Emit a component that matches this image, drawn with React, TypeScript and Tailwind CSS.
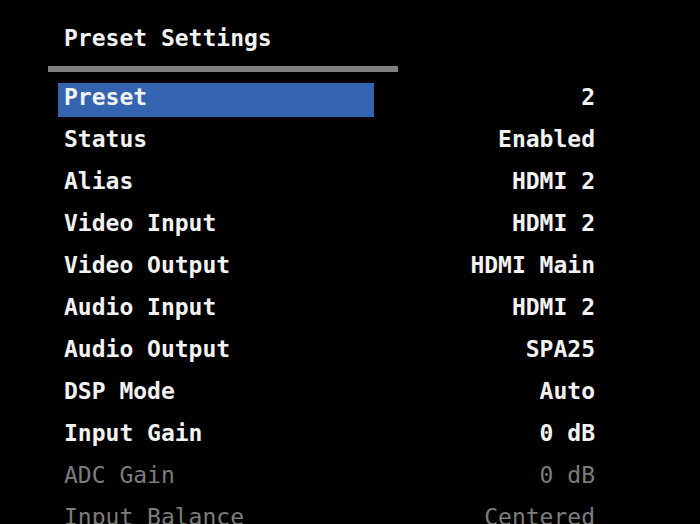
import React from "react";

const rows: { label: string; value: string; selected?: boolean; disabled?: boolean }[] = [
  { label: "Preset", value: "2", selected: true },
  { label: "Status", value: "Enabled" },
  { label: "Alias", value: "HDMI 2" },
  { label: "Video Input", value: "HDMI 2" },
  { label: "Video Output", value: "HDMI Main" },
  { label: "Audio Input", value: "HDMI 2" },
  { label: "Audio Output", value: "SPA25" },
  { label: "DSP Mode", value: "Auto" },
  { label: "Input Gain", value: "0 dB" },
  { label: "ADC Gain", value: "0 dB", disabled: true },
  { label: "Input Balance", value: "Centered", disabled: true },
];

export default function App() {
  return (
    <div
      className="w-[700px] h-[524px] bg-black overflow-hidden flex flex-col"
      style={{ fontFamily: '"DejaVu Sans Mono", "Liberation Mono", monospace' }}
    >
      <div className="shrink-0 mt-[21px] ml-[64px] h-[34px] leading-[34px] text-[23px] font-bold text-[#f2f2f2] whitespace-pre">
        Preset Settings
      </div>
      <div className="shrink-0 mt-[11px] ml-[48px] w-[350px] h-[6px] bg-[#7f7f7f]" />
      <div className="shrink-0 mt-[4px] flex flex-col">
        {rows.map((r) => (
          <div key={r.label} className="flex h-[42px] shrink-0">
            <div
              className={
                "ml-[58px] w-[316px] h-[34px] mt-[7px] pl-[6px] pb-[6px] flex items-center whitespace-pre text-[23px] " +
                (r.selected ? "bg-[#3463b0] " : "") +
                (r.disabled ? "text-[#7c7c7c] font-normal" : "text-[#f2f2f2] font-bold")
              }
            >
              {r.label}
            </div>
            <div
              className={
                "flex-1 pr-[105px] h-[34px] mt-[7px] pb-[6px] flex items-center justify-end whitespace-pre text-[23px] " +
                (r.disabled ? "text-[#7c7c7c] font-normal" : "text-[#f2f2f2] font-bold")
              }
            >
              {r.value}
            </div>
          </div>
        ))}
      </div>
    </div>
  );
}
